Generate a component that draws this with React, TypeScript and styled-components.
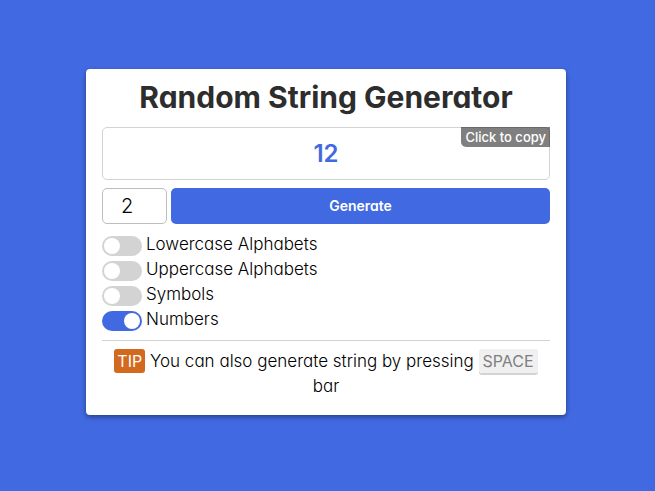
import React, { useCallback, useEffect, useState } from "react";
import styled, { createGlobalStyle } from "styled-components";

const GlobalStyle = createGlobalStyle`
  *, *::before, *::after { box-sizing: border-box; }
  body {
    margin: 0;
    background: royalblue;
    color: #000;
    font-family: Inter, "Open Sans", sans-serif;
    font-feature-settings: "cv11" 1;
    font-size: 17px;
    font-weight: 300;
    line-height: 25px;
  }
  button, input { font-family: inherit; font-feature-settings: inherit; }
`;

const Page = styled.main`
  min-height: 100vh;
  display: grid;
  place-items: center;
  padding: 8px 11px 15px 8px;
`;

const Card = styled.section`
  width: 100%;
  max-width: 480px;
  padding: 8px 16px 16px;
  border-radius: 4px;
  background: #fff;
  box-shadow: 0 2px 5px rgba(0, 0, 0, 0.4);
`;

const Title = styled.h1`
  margin: 0 0 10px;
  color: #2d2d2d;
  font-size: 30px;
  font-weight: 650;
  line-height: 40px;
  text-align: center;
`;

const Output = styled.button`
  position: relative;
  display: block;
  width: 100%;
  height: 53px;
  padding: 0;
  border: 1px solid lightgray;
  border-radius: 5px;
  background: #fff;
  color: royalblue;
  font-size: 24px;
  font-weight: 600;
  line-height: 50px;
  cursor: pointer;
`;

const CopyHint = styled.span`
  position: absolute;
  top: -1px;
  right: -1px;
  padding: 0 4px;
  border-bottom-left-radius: 5px;
  background: rgba(0, 0, 0, 0.5);
  color: #fff;
  font-size: 13px;
  font-weight: 500;
  line-height: 20px;
`;

const Controls = styled.div`
  display: flex;
  gap: 4px;
  margin: 8px 0;
`;

const LengthInput = styled.input`
  width: 65px;
  height: 36px;
  padding: 0 18px;
  border: 1px solid #bdbdbd;
  border-radius: 5px;
  background: #fff;
  color: #000;
  font-size: 20px;
  font-weight: 300;
  appearance: textfield;
  &::-webkit-inner-spin-button { appearance: none; margin: 0; }
`;

const GenerateButton = styled.button`
  flex: 1;
  height: 36px;
  padding: 0 0 2px;
  border: 0;
  border-radius: 5px;
  background: royalblue;
  color: #fff;
  font-size: 14px;
  font-weight: 600;
  cursor: pointer;
`;

const Option = styled.label`
  display: flex;
  align-items: center;
  gap: 4px;
  width: fit-content;
  height: 25px;
`;

const Switch = styled.input`
  appearance: none;
  display: flex;
  align-items: center;
  width: 40px;
  height: 20px;
  margin: 3px 0 0;
  padding: 0 2px;
  border-radius: 10px;
  background: lightgray;
  cursor: pointer;

  &::before {
    content: "";
    width: 16px;
    height: 16px;
    border-radius: 50%;
    background: #fff;
  }
  &:checked {
    justify-content: flex-end;
    background: royalblue;
  }
`;

const Divider = styled.hr`
  height: 1px;
  margin: 8px 0;
  border: 0;
  background: lightgray;
`;

const Tip = styled.p`
  margin: 0;
  text-align: center;
`;

const TipBadge = styled.span`
  padding: 2px 3px;
  border-radius: 3px;
  background: chocolate;
  color: #fff;
  font-size: 16px;
  font-weight: 400;
`;

const Key = styled.kbd`
  padding: 2px 4px;
  border-radius: 3px;
  background: #f0f0f0;
  box-shadow: 0 2px 0 lightgray;
  color: gray;
  font-family: inherit;
  font-size: 16px;
  font-weight: 400;
`;

const OPTIONS = [
  { id: "lower", label: "Lowercase Alphabets", chars: "abcdefghijklmnopqrstuvwxyz" },
  { id: "upper", label: "Uppercase Alphabets", chars: "ABCDEFGHIJKLMNOPQRSTUVWXYZ" },
  { id: "symbols", label: "Symbols", chars: "!@#$%^&*()_+-=?" },
  { id: "numbers", label: "Numbers", chars: "0123456789" },
];

export default function App() {
  const [value, setValue] = useState("12");
  const [length, setLength] = useState("2");
  const [enabled, setEnabled] = useState<string[]>(["numbers"]);

  const generate = useCallback(() => {
    const pool = OPTIONS.filter((o) => enabled.includes(o.id)).map((o) => o.chars).join("");
    if (!pool) return;
    const size = Math.max(1, Number(length) || 1);
    setValue(Array.from({ length: size }, () => pool[Math.floor(Math.random() * pool.length)]).join(""));
  }, [enabled, length]);

  useEffect(() => {
    const onKey = (e: KeyboardEvent) => {
      if (e.code === "Space" && e.target === document.body) {
        e.preventDefault();
        generate();
      }
    };
    window.addEventListener("keydown", onKey);
    return () => window.removeEventListener("keydown", onKey);
  }, [generate]);

  const toggle = (id: string) =>
    setEnabled((list) => (list.includes(id) ? list.filter((x) => x !== id) : [...list, id]));

  return (
    <>
      <GlobalStyle />
      <Page>
        <Card>
          <Title>Random String Generator</Title>
          <Output type="button" onClick={() => navigator.clipboard?.writeText(value)}>
            {value}
            <CopyHint>Click to copy</CopyHint>
          </Output>
          <Controls>
            <LengthInput
              type="number"
              min={1}
              aria-label="String length"
              value={length}
              onChange={(e) => setLength(e.target.value)}
            />
            <GenerateButton type="button" onClick={generate}>Generate</GenerateButton>
          </Controls>
          {OPTIONS.map((o) => (
            <Option key={o.id} htmlFor={o.id}>
              <Switch id={o.id} type="checkbox" checked={enabled.includes(o.id)} onChange={() => toggle(o.id)} />
              {o.label}
            </Option>
          ))}
          <Divider />
          <Tip>
            <TipBadge>TIP</TipBadge> You can also generate string by pressing <Key>SPACE</Key> bar
          </Tip>
        </Card>
      </Page>
    </>
  );
}
